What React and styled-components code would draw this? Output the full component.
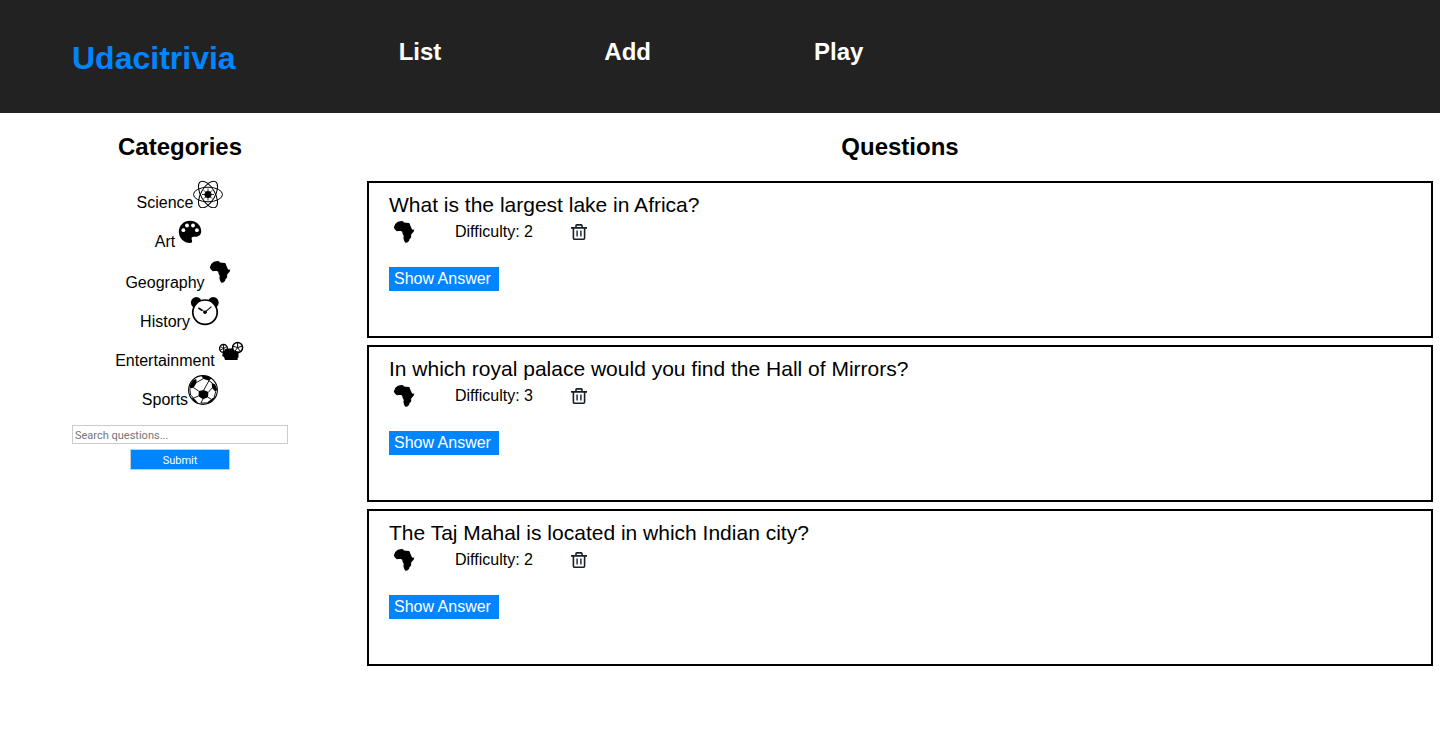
import React from 'react';
import styled, { createGlobalStyle } from 'styled-components';

const GlobalStyle = createGlobalStyle`
  *, *::before, *::after { box-sizing: border-box; }
  body {
    margin: 0;
    background: #fff;
    color: #000;
    font: 16px/18px "Liberation Sans", Arial, sans-serif;
  }
`;

const Header = styled.header`
  display: flex;
  align-items: flex-start;
  gap: 163px;
  padding: 38px 72px 39px;
  background: #222;
`;

const Title = styled.h1`
  margin: 0;
  font-size: 32px;
  line-height: 36px;
  color: #0085ff;
`;

const Nav = styled.nav`
  display: flex;
  gap: 163px;
`;

const NavLink = styled.a`
  font-size: 24px;
  font-weight: bold;
  line-height: 28px;
  color: #fff;
  text-decoration: none;
`;

const Brand = styled.div`
  padding-top: 2px;
  height: 36px;
`;

const Main = styled.main`
  display: grid;
  grid-template-columns: 1fr 3fr;
`;

const Sidebar = styled.aside`
  display: flex;
  flex-direction: column;
  align-items: center;
  padding-top: 20px;
`;

const Heading = styled.h2`
  margin: 0;
  font-size: 24px;
  line-height: 28px;
  text-align: center;
`;

const CategoryList = styled.ul`
  margin: 17px 0 11px;
  padding: 0;
  list-style: none;
  text-align: center;
`;

const Category = styled.li`
  margin-bottom: 5px;
  cursor: pointer;
  svg { vertical-align: baseline; }
`;

const SearchForm = styled.form`
  display: flex;
  flex-direction: column;
  align-items: center;
  gap: 5px;
  width: 60%;
`;

const SearchInput = styled.input`
  width: 100%;
  height: 19px;
  padding: 2px 2px 0;
  border: 1px solid #ccc;
  border-radius: 0;
  font: 11px Roboto, sans-serif;
  &::placeholder { color: #757575; }
`;

const SubmitButton = styled.button`
  width: 100px;
  height: 21px;
  padding: 2px 0 0;
  border: 1px solid #ccc;
  background: #0085ff;
  color: #fff;
  font: 11px Roboto, sans-serif;
`;

const Questions = styled.section`
  display: flex;
  flex-direction: column;
  padding: 20px 7px;
`;

const CardList = styled.div`
  display: flex;
  flex-direction: column;
  gap: 7px;
  margin-top: 20px;
`;

const Card = styled.article`
  min-height: 157px;
  padding: 10px 20px;
  border: 2px solid #000;
`;

const QuestionText = styled.div`
  font-size: 21px;
  line-height: 24px;
`;

const Status = styled.div`
  display: flex;
  align-items: center;
  gap: 36px;
  height: 30px;
  margin-bottom: 20px;
`;

const DeleteButton = styled.button`
  display: flex;
  align-items: center;
  justify-content: center;
  width: 20px;
  height: 20px;
  padding: 0;
  border: 0;
  background: none;
  color: #172029;
`;

const AnswerButton = styled.button`
  width: 110px;
  height: 24px;
  padding: 0 5px;
  border: 0;
  background: #0085ff;
  color: #fff;
  font: inherit;
  text-align: left;
`;

const ScienceIcon = () => (
  <svg width="30" height="30" viewBox="0 0 30 30" fill="none" stroke="#000" aria-hidden="true">
    <ellipse cx="15" cy="16.5" rx="14.5" ry="7.3" />
    <ellipse cx="15" cy="16.5" rx="14.8" ry="7" transform="rotate(60 15 16.5)" />
    <ellipse cx="15" cy="16.5" rx="14.8" ry="7" transform="rotate(-60 15 16.5)" />
    <circle cx="15" cy="16.5" r="3.5" fill="#000" stroke="none" />
    <path d="M15 10.5v12M9 16.5h12M10.8 12.3l8.4 8.4M19.2 12.3l-8.4 8.4" strokeWidth=".8" />
  </svg>
);

const ArtIcon = () => (
  <svg width="30" height="30" viewBox="0 0 30 30" aria-hidden="true">
    <path d="M15 3.8C8.8 3.8 3.8 8.7 3.8 14.8S8.9 26.1 15 26.1c1.7 0 2.3-.8 2.1-2l-.5-2.3c-.2-1.4.5-2.1 1.9-2.1h2.2c3.2 0 5.5-2.3 5.5-5.5C26.2 8.400 21.200 3.800 15 3.800z" />
    <g fill="#fff">
      <circle cx="8.400" cy="13.200" r="1.900" />
      <circle cx="12" cy="8.500" r="1.900" />
      <circle cx="18" cy="8.500" r="1.900" />
      <circle cx="21.900" cy="13.200" r="1.900" />
    </g>
  </svg>
);

const GeographyIcon = () => (
  <svg width="30" height="32" viewBox="0 0 30 32" aria-hidden="true">
    <path d="M5.2 10.6L6.2 8l2.6-2.200L12.400 5l1.800.3.6 1.200 2.600.2 2.900.4 1.200 2.900 1.500 3.200.9.6 1.400-.4-.4 1.900-2.800 3.400.1 2.800-1.600 1.500-.6 2-1.700 1.600-2 .2-1.100-1.900-.8-3 .4-1.800-1.200-2.400-.4-2-1.200-.8-2.200.1-2 .2-1.900-1.600-1.100-2z" />
  </svg>
);

const HistoryIcon = () => (
  <svg width="30" height="30" viewBox="0 0 30 30" fill="none" stroke="#000" aria-hidden="true">
    <circle cx="6.400" cy="5.600" r="5.500" fill="#000" stroke="none" />
    <circle cx="23.200" cy="5.600" r="5.500" fill="#000" stroke="none" />
    <circle cx="15" cy="15.200" r="12.200" fill="#fff" strokeWidth="1.700" />
    <path d="M15 15.200l6.500-5.600" strokeWidth="1.100" />
    <path d="M12.400 13.400l-4-2.400" strokeWidth="1.700" />
    <path d="M15 15.200l-2.600-1.800" />
    <circle cx="15" cy="15.200" r="1.800" fill="#000" stroke="none" />
  </svg>
);

const EntertainmentIcon = () => (
  <svg width="30" height="30" viewBox="0 0 30 30" aria-hidden="true">
    <g fill="none" stroke="#000">
      <circle cx="8.500" cy="12.400" r="3.900" strokeWidth="1.400" />
      <path d="M8.500 8.500v8M5 10.400l7 4M12 10.400l-7 4" strokeWidth=".9" />
      <circle cx="22.600" cy="11.600" r="5" strokeWidth="1.500" />
      <path d="M22.600 11.600V6.700M22.600 11.600l4.700-1.500M22.600 11.600l2.900 4M22.600 11.600l-2.900 4M22.600 11.600l-4.700-1.500" />
    </g>
    <path d="M8 15.500l3.500-2.800 5.500-.5 2.500 3h4v6.300l-.9.5V24H10l-1-3-1.800-1z" />
  </svg>
);

const SportsIcon = () => (
  <svg width="30" height="30" viewBox="0 0 30 30" aria-hidden="true">
    <circle cx="15" cy="15" r="14.400" fill="none" stroke="#000" strokeWidth="1.100" />
    <path d="M10.800 16.100l5-1.200 4.600 2-.4 5.400-5 1.900-4.500-3zM1.600 10.500l3.300-5.300 3.300-1.200.6 3.500-3.300 5.300-3.700.8zM13.400.8l5.500.2 4.400 2.500-2.300 2.300-5.900-2zM23.700 7.800l3.600 1.600 1.800 5-1.500 2.700-3.600-4.200zM3.300 22.300l2.400.7 4 4.400v1.400l-3.700-2.200zM19.500 27.300l5.300-4.400 2-.2-3.300 4.100-4.600 2.300z" />
    <path d="M5.400 12.600l5.400 3.500M8.800 7.300l6.300-3.500M15.800 15l5.200-9.400M20.400 17.200l4-4.500M10.500 21L5.700 23M20 22.300l3.200 1.900M15 24l-2.200 4.100 6.700-.2M20.400 5.300l3.800 2.700M1.800 13.500l.8 6.500 3.100 3M27.600 17l-1.600 6" fill="none" stroke="#000" strokeWidth=".9" />
  </svg>
);

const TrashIcon = () => (
  <svg width="16" height="16" viewBox="0 0 16 16" fill="none" stroke="currentColor" strokeWidth="1.600" aria-hidden="true">
    <path d="M0 3.900h16M2.400 4v10.100a1.100 1.100 0 0 0 1.100 1.100h9a1.100 1.100 0 0 0 1.100-1.100V4M5 3.700V1.600Q5 .9 5.700.9h4.600q.7 0 .7.7v2.100" />
    <path d="M6.100 6.600v5.800M9.900 6.600v5.800" strokeWidth="1.400" />
  </svg>
);

const categories = [
  { name: 'Science', Icon: ScienceIcon },
  { name: 'Art', Icon: ArtIcon },
  { name: 'Geography', Icon: GeographyIcon },
  { name: 'History', Icon: HistoryIcon },
  { name: 'Entertainment', Icon: EntertainmentIcon },
  { name: 'Sports', Icon: SportsIcon },
];

const questions = [
  { text: 'What is the largest lake in Africa?', difficulty: 2 },
  { text: 'In which royal palace would you find the Hall of Mirrors?', difficulty: 3 },
  { text: 'The Taj Mahal is located in which Indian city?', difficulty: 2 },
];

export default function App() {
  return (
    <>
      <GlobalStyle />
      <Header>
        <Brand><Title>Udacitrivia</Title></Brand>
        <Nav>
          <NavLink href="#list">List</NavLink>
          <NavLink href="#add">Add</NavLink>
          <NavLink href="#play">Play</NavLink>
        </Nav>
      </Header>
      <Main>
        <Sidebar>
          <Heading>Categories</Heading>
          <CategoryList>
            {categories.map(({ name, Icon }) => (
              <Category key={name}>{name}<Icon /></Category>
            ))}
          </CategoryList>
          <SearchForm onSubmit={(e) => e.preventDefault()}>
            <SearchInput aria-label="Search questions" placeholder="Search questions..." />
            <SubmitButton type="submit">Submit</SubmitButton>
          </SearchForm>
        </Sidebar>
        <Questions>
          <Heading>Questions</Heading>
          <CardList>
            {questions.map(({ text, difficulty }) => (
              <Card key={text}>
                <QuestionText>{text}</QuestionText>
                <Status>
                  <GeographyIcon />
                  <div>Difficulty: {difficulty}</div>
                  <DeleteButton type="button" aria-label="Delete question">
                    <TrashIcon />
                  </DeleteButton>
                </Status>
                <AnswerButton type="button">Show Answer</AnswerButton>
              </Card>
            ))}
          </CardList>
        </Questions>
      </Main>
    </>
  );
}
